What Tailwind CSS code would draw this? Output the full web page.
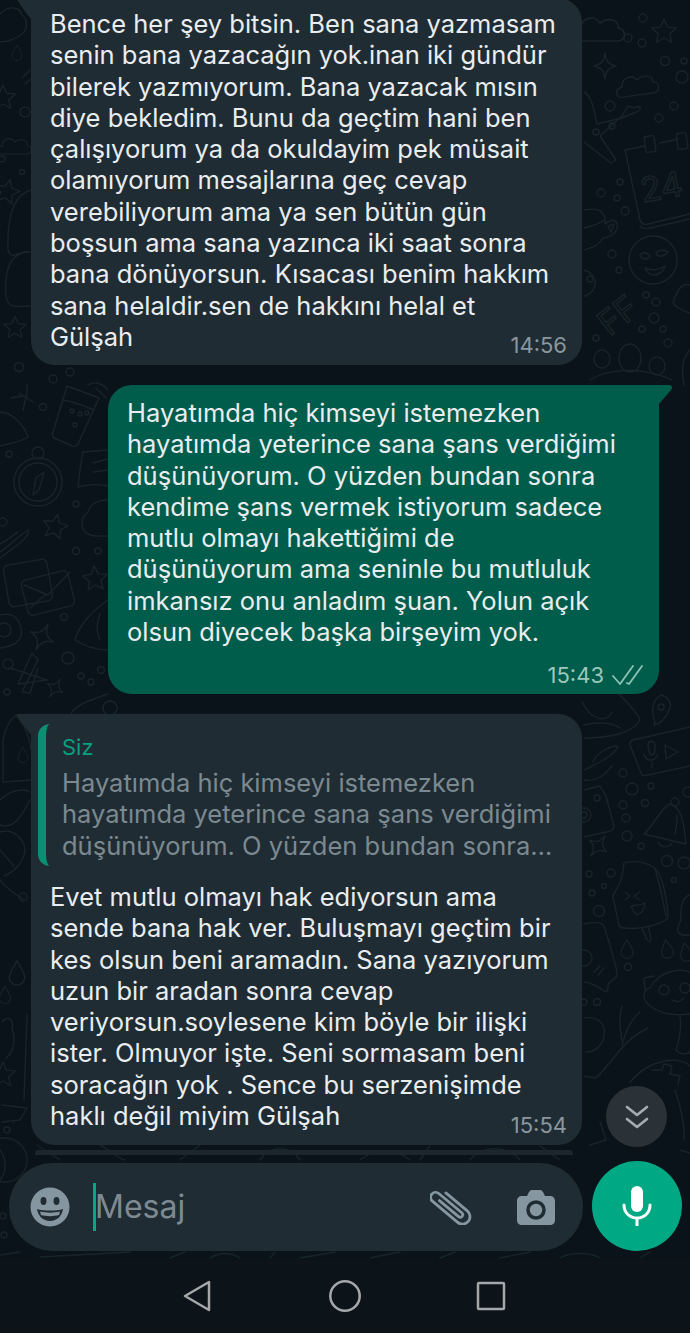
<!DOCTYPE html>
<html><head><meta charset="utf-8"><script src="https://cdn.jsdelivr.net/npm/@tailwindcss/browser@4"></script></head>
<body class="m-0 bg-[#0a1319]">
<div class="relative w-[690px] h-[1333px] overflow-hidden bg-[#0a1319] flex flex-col font-['Inter',sans-serif] text-[25.5px] leading-[31.3px] text-[#e9edef]">
<svg class="absolute inset-0" width="690" height="1333" viewBox="0 0 690 1333" fill="none" stroke="#18242a" stroke-width="1.4" stroke-linejoin="round" stroke-linecap="round">
<defs>
<path id="st" d="M0-13 3.5-4.9 12.4-4 5.7 1.9 7.6 10.5 0 6-7.6 10.5-5.7 1.9-12.4-4-3.5-4.9Z"/>
<path id="s4" d="M0-13C1-5 3-2 11 0 3 2 1 5 0 13-1 5-3 2-11 0-3-2-1-5 0-13Z"/>
<path id="dr" d="M0-11C4-4 7 0 7 4A7 7 0 0 1-7 4C-7 0-4-4 0-11Z"/>
<path id="cl" d="M-18 10C-24 10-24 0-16 0-16-10-4-12 0-5 6-10 16-8 15-1 22 0 22 9 15 10Z"/>
</defs>
<!-- right column, top -->
<use href="#cl" transform="translate(600 29) scale(1.2)"/><use href="#st" transform="translate(664 32)"/><use href="#s4" transform="translate(605 66)"/><use href="#cl" transform="translate(638 85) rotate(-8)"/>
<circle cx="643" cy="18" r="4"/><circle cx="628" cy="38" r="4"/><circle cx="642" cy="43" r="4"/><circle cx="665" cy="61" r="4.5"/><circle cx="684" cy="61" r="3"/><circle cx="682" cy="77" r="6"/><circle cx="610" cy="106" r="5"/><circle cx="674" cy="106" r="4"/><circle cx="659" cy="118" r="4"/><circle cx="612" cy="126" r="3"/><circle cx="596" cy="132" r="3"/><circle cx="620" cy="182" r="3"/><circle cx="601" cy="193" r="4"/><circle cx="617" cy="198" r="3"/><circle cx="625" cy="211" r="4"/><circle cx="612" cy="254" r="4"/><circle cx="619" cy="270" r="3"/><circle cx="646" cy="295" r="3"/><circle cx="656" cy="302" r="4"/><circle cx="654" cy="318" r="5"/><circle cx="642" cy="329" r="3"/><circle cx="663" cy="329" r="3"/><circle cx="668" cy="343" r="4"/><circle cx="596" cy="338" r="3"/>
<path d="M584 92C592 96 594 110 597 124L622 118 636 112C642 110 642 104 634 108L628 106 622 116 600 136 616 160 611 163 584 142"/>
<path d="M625 150 640 220C641 224 644 225 648 224L690 214M640 226C642 229 646 229 650 228L690 219M625 150 645 146M660 143 678 139"/>
<rect x="645" y="136" width="10" height="16" rx="2" transform="rotate(-8 650 144)"/><rect x="677" y="133" width="10" height="16" rx="2" transform="rotate(-8 682 141)"/>
<text x="640" y="199" font-family="Inter" font-size="34" transform="rotate(-10 662 185)">24</text>
<path d="M584 210C600 207 606 212 605 224 612 218 619 220 617 228 615 235 608 238 603 238 600 244 592 248 584 250M584 228C592 226 600 224 604 220M608 226 614 224 611 232Z"/>
<circle cx="653" cy="260" r="24"/><path d="M640 255C642 251 650 253 650 257 646 260 642 260 640 255ZM656 253C659 249 666 250 668 252 664 257 658 258 656 253ZM645 268C652 271 660 270 665 266 664 274 650 280 645 268Z"/>
<text x="594" y="328" font-family="Inter" font-size="34" transform="rotate(-38 615 310)">FF</text>
<path d="M584 270C592 272 598 280 594 288 590 296 584 296 584 296"/><circle cx="590" cy="279" r="3"/>
<path d="M690 285C680 282 675 296 673 303 678 310 690 313 690 313"/>
<ellipse cx="602" cy="359" rx="8" ry="9"/><ellipse cx="630" cy="358" rx="11" ry="14"/><ellipse cx="657" cy="366" rx="8" ry="9"/><path d="M590 380C605 370 640 365 672 380"/><path d="M690 350C680 360 682 375 684 385"/>
<!-- left top -->
<path d="M0 14C10 4 20 8 21 14 28 18 28 30 22 34 14 40 6 42 0 42"/><use href="#dr" transform="translate(17 53) scale(.7)"/><path d="M22 78 30 70M25 84 32 78"/><use href="#st" transform="translate(3 98)"/><circle cx="25" cy="112" r="5"/><use href="#cl" transform="translate(15 146) scale(.8)"/><circle cx="22" cy="172" r="2.5"/><circle cx="2" cy="159" r="3"/><use href="#st" transform="translate(7 192) rotate(15)"/>
<path d="M31 190C12 195 7 220 8 250 12 262 18 250 30 252"/><path d="M30 252C10 252 4 270 6 296 8 310 18 306 30 306"/><use href="#st" transform="translate(15 328) scale(.9)"/>
<!-- left middle -->
<circle cx="19" cy="367" r="4.5"/><circle cx="53" cy="379" r="4"/><circle cx="70" cy="372" r="4"/><circle cx="43" cy="407" r="3.5"/><circle cx="9" cy="454" r="3"/><circle cx="76" cy="504" r="3"/><circle cx="3" cy="522" r="4"/><circle cx="76" cy="551" r="3.5"/><circle cx="98" cy="551" r="3"/><circle cx="64" cy="617" r="3.5"/><circle cx="68" cy="658" r="6"/><circle cx="101" cy="670" r="3.5"/><circle cx="81" cy="676" r="3"/><circle cx="91" cy="682" r="3"/><circle cx="8" cy="664" r="5"/><circle cx="7" cy="692" r="3"/>
<path d="M19 393 33 402M27 385C28 392 26 397 23 410M11 398C18 396 22 396 27 396"/>
<path d="M0 412C12 412 24 425 28 437 20 442 8 444 0 446"/>
<path d="M67 386 99 398 78 444C76 447 73 447 70 445L54 438C52 436 52 434 53 432Z"/><path d="M62 400C72 401 82 405 94 410"/><circle cx="72" cy="411" r="2"/><circle cx="80" cy="414" r="2"/><circle cx="75" cy="425" r="2"/><circle cx="87" cy="413" r="2"/>
<path d="M88 385C96 380 104 385 108 390M96 388 106 398"/>
<circle cx="38" cy="482" r="24"/><circle cx="38" cy="482" r="19"/><circle cx="38" cy="453" r="6"/><path d="M44 472 39 490 33 495 36 478Z"/>
<path d="M83 452 108 450M80 470C82 460 82 456 83 452M108 486C96 484 90 484 78 487L80 470M93 463 108 459M93 472 108 470"/>
<use href="#st" transform="translate(55 527) rotate(12)"/><path d="M108 500C94 500 90 506 88 512 80 518 80 530 88 534 94 537 102 536 108 536"/>
<path d="M0 552C10 545 20 535 28 530 30 536 22 542 0 558M0 544C8 540 14 534 18 532"/>
<rect x="6" y="562" width="44" height="42" rx="5" transform="rotate(-10 28 583)"/><rect x="24" y="575" width="48" height="36" rx="5" transform="rotate(-14 48 593)"/><path d="M24 585 48 595 70 572M30 608 46 594"/>
<use href="#st" transform="translate(95 579) rotate(-4)"/>
<path d="M0 615C12 612 18 618 20 625 24 634 20 642 12 645 8 647 4 647 0 648"/><circle cx="4" cy="630" r="7"/><use href="#s4" transform="translate(42 637) rotate(25) scale(1.1)"/>
<path d="M108 600C90 612 78 628 75 640 82 645 95 650 108 650M100 614C96 624 96 632 100 640"/>
<path d="M10 668 47 680 18 684 32 653 38 660 22 692 30 693 38 668"/><use href="#s4" transform="translate(55 688) rotate(30) scale(.8)"/>
<path d="M70 715C75 705 90 700 108 694"/><circle cx="110" cy="708" r="7"/>
<!-- left lower -->
<path d="M3 740C6 725 12 718 16 715L24 726C28 735 31 744 31 750M3 740 3 782 31 780"/><use href="#dr" transform="translate(23 755) scale(.7)"/>
<path d="M0 800C10 790 24 788 30 792M0 825C14 830 22 815 30 800"/><path d="M0 832C12 828 24 838 25 850 24 862 14 872 4 876M0 850 14 866"/><path d="M0 880C4 886 12 892 24 900"/><circle cx="23" cy="897" r="4"/>
<use href="#dr" transform="translate(17 973) scale(1.1)"/><use href="#dr" transform="translate(5 995) scale(.8)"/><path d="M2 1022C8 1015 14 1020 12 1028 16 1040 14 1052 6 1058M27 1015 24 1100M2 1105 27 1108 20 1120 2 1122"/><use href="#st" transform="translate(3 1075)"/><circle cx="7" cy="1130" r="3"/>
<circle cx="5" cy="1160" r="22"/><path d="M0 1150C6 1158 8 1170 0 1180"/><circle cx="3" cy="1216" r="3"/><circle cx="4" cy="1235" r="3"/><path d="M0 1255 20 1252"/>
<!-- gap lower + right lower -->
<path d="M582 702C590 718 605 725 612 712M615 690C625 700 636 710 640 720 634 732 612 738 584 738M584 725C596 722 612 722 620 728"/>
<path d="M661 695C654 699 652 706 653 714 654 720 656 722 654 725 660 724 666 718 670 708 672 702 667 696 661 695Z"/><circle cx="661" cy="707" r="3"/>
<path d="M633 740 690 727M630 745 641 773C642 776 644 776 648 775L690 766M630 745C629 742 631 741 633 740"/><path d="M648 745C648 750 650 755 652 755 655 755 655 750 655 745 654 740 648 740 648 745ZM644 754C646 762 654 762 658 755M652 762V768"/><path d="M665 745 678 752 666 759Z"/>
<path d="M618 746C616 752 606 760 592 766 588 768 586 770 584 770M618 746C608 746 596 754 593 762M584 780C596 782 604 776 612 766"/>
<circle cx="623" cy="773" r="4"/><circle cx="632" cy="789" r="6"/><circle cx="651" cy="786" r="3"/><circle cx="623" cy="805" r="4"/><circle cx="645" cy="803" r="3.5"/><circle cx="626" cy="818" r="4"/><circle cx="627" cy="836" r="5"/><circle cx="641" cy="846" r="3"/><circle cx="667" cy="861" r="5.5"/><circle cx="684" cy="863" r="6"/><circle cx="674" cy="880" r="2.5"/><circle cx="611" cy="873" r="4"/><circle cx="589" cy="874" r="3"/><circle cx="604" cy="886" r="2.5"/><circle cx="592" cy="893" r="3"/><circle cx="599" cy="911" r="5.5"/><circle cx="628" cy="967" r="3.5"/><circle cx="597" cy="1002" r="3.5"/><circle cx="584" cy="1002" r="3"/><circle cx="688" cy="792" r="5"/>
<path d="M584 790 600 786 606 796 614 826C614 830 610 832 606 832L584 837"/><circle cx="597" cy="798" r="3"/><circle cx="584" cy="815" r="7"/><circle cx="584" cy="815" r="3"/>
<path d="M644 834C654 826 660 808 670 804 680 806 684 820 686 844Z"/><circle cx="675" cy="802" r="4"/><path d="M677 815C678 822 676 828 675 834"/><path d="M658 842C660 848 670 848 672 843"/>
<use href="#s4" transform="translate(598 846) rotate(35) scale(.95)"/>
<path d="M613 897C612 892 622 890 624 863 634 860 652 862 658 872 664 882 668 906 668 918 660 925 640 930 624 928 620 928 618 925 618 920ZM642 928 646 938C650 944 652 942 650 934L648 926M655 868C660 886 664 905 666 916"/>
<path d="M625 892 630 896 625 900M640 892 634 896 640 900M631 906C636 905 642 905 645 903 644 910 640 916 636 914 634 912 632 909 631 906Z"/>
<use href="#dr" transform="translate(627 949) scale(.85)"/><use href="#dr" transform="translate(667 949) rotate(-10) scale(.85)"/><use href="#dr" transform="translate(686 952) rotate(-10) scale(.85)"/>
<path d="M690 895C682 896 680 910 681 920 678 925 676 932 680 934 684 936 688 935 690 935"/>
<path d="M584 924C594 922 602 922 604 926 610 945 614 958 617 972 618 976 616 978 610 982 606 984 610 990 606 992 600 988 590 982 584 982"/><circle cx="584" cy="958" r="8"/><path d="M594 972 600 966M598 975 604 968"/>
<path d="M650 1006C642 1000 642 990 650 988 660 970 680 968 690 972M650 1006C660 1014 676 1016 690 1014M645 990 644 978 654 976"/><circle cx="664" cy="990" r="5"/><circle cx="685" cy="988" r="5"/><path d="M672 1000 678 1002 684 998"/><path d="M680 1016C682 1030 678 1044 676 1050 682 1056 690 1054 690 1050"/>
<path d="M584 1018C596 1016 606 1022 604 1035 603 1046 594 1052 586 1052M622 1006C618 1018 620 1030 622 1040M640 1012C632 1018 626 1030 622 1045M648 1028C636 1034 628 1040 620 1050 612 1060 604 1070 596 1078L584 1076"/>
<path d="M630 1082C650 1058 680 1056 690 1066M652 1070 662 1070 664 1064 672 1066 670 1074 680 1076 678 1084"/>
<!-- gap under bubbles -->
<path d="M37 1145 60 1160M100 1145C110 1150 120 1160 125 1160M200 1145 180 1160M260 1160C270 1145 290 1145 300 1160M360 1160C375 1148 395 1148 410 1160M430 1146 420 1160M470 1160C480 1145 510 1145 520 1160M540 1146 560 1160"/>
<path d="M600 1122 606 1140 590 1145M675 1090C680 1105 685 1125 684 1140M680 1150 690 1153"/>
<path d="M40 1257 130 1252M170 1258 185 1252M210 1258C220 1252 230 1252 240 1258M270 1258 275 1252M300 1258 335 1252M370 1258 400 1252M440 1258 455 1252M500 1258 530 1252M560 1258C570 1252 590 1252 600 1258M640 1258 650 1252"/>
</svg>
<main class="relative flex-1 flex flex-col items-start">
<div class="relative w-[551px] h-[367px] ml-[31px] -mt-[2px] rounded-[24px] rounded-tl-none bg-[#202c33] pl-[19px] pt-[10px]">
<svg class="absolute -left-[14px] top-0" width="15" height="22" viewBox="0 0 15 22"><path d="M0 0H15V22C11 18 5 9 1 3 0 2 0 1 0 0Z" fill="#202c33"/></svg>
<div>Bence her şey bitsin. Ben sana yazmasam</div><div>senin bana yazacağın yok.inan iki gündür</div><div>bilerek yazmıyorum. Bana yazacak mısın</div><div>diye bekledim. Bunu da geçtim hani ben</div><div>çalışıyorum ya da okuldayim pek müsait</div><div>olamıyorum mesajlarına geç cevap</div><div>verebiliyorum ama ya sen bütün gün</div><div>boşsun ama sana yazınca iki saat sonra</div><div>bana dönüyorsun. Kısacası benim hakkım</div><div>sana helaldir.sen de hakkını helal et</div><div>Gülşah</div>
<span class="absolute right-[15px] bottom-[4px] text-[22px] text-[#8a979e]">14:56</span>
</div>
<div class="relative mt-5 ml-[108px] w-[551px] h-[309px] rounded-[24px] rounded-tr-none bg-[#005c4b] pl-[19px] pt-[12px]">
<svg class="absolute -right-[14px] top-0" width="15" height="22" viewBox="0 0 15 22"><path d="M0 0H11C14 0 15 3 13 5L0 20Z" fill="#005c4b"/></svg>
<div>Hayatımda hiç kimseyi istemezken</div><div>hayatımda yeterince sana şans verdiğimi</div><div>düşünüyorum. O yüzden bundan sonra</div><div>kendime şans vermek istiyorum sadece</div><div>mutlu olmayı hakettiğimi de</div><div>düşünüyorum ama seninle bu mutluluk</div><div>imkansız onu anladım şuan. Yolun açık</div><div>olsun diyecek başka birşeyim yok.</div>
<div class="absolute right-[16px] bottom-[3px] flex items-center gap-[8px] text-[22px] text-[#9cc8bc]"><span>15:43</span>
<svg width="31" height="21" viewBox="0 0 31 21" fill="none" stroke="#8fc3b4" stroke-width="1.8" stroke-linecap="round" stroke-linejoin="round"><path d="M1 11 8 19 21 1M15 18 17 19 30 1"/></svg></div>
</div>
<div class="relative mt-5 ml-[31px] w-[551px] h-[431px] rounded-[24px] rounded-tl-none bg-[#202c33] px-[7px] pt-[10px]">
<svg class="absolute -left-[14px] top-0" width="15" height="22" viewBox="0 0 15 22"><path d="M0 0H15V22C11 18 5 9 1 3 0 2 0 1 0 0Z" fill="#202c33"/></svg>
<div class="h-[142px] rounded-l-[12px] border-l-[8px] border-[#0b8f74] pl-[16px] pt-[9px] text-[#7b8991]">
<div class="text-[#06a07f] text-[22px] leading-[28px] mb-[6px]">Siz</div>
<div>Hayatımda hiç kimseyi istemezken</div><div>hayatımda yeterince sana şans verdiğimi</div><div>düşünüyorum. O yüzden bundan sonra…</div>
</div>
<div class="pl-[12px] pt-[15px]"><div>Evet mutlu olmayı hak ediyorsun ama</div><div>sende bana hak ver. Buluşmayı geçtim bir</div><div>kes olsun beni aramadın. Sana yazıyorum</div><div>uzun bir aradan sonra cevap</div><div>veriyorsun.soylesene kim böyle bir ilişki</div><div>ister. Olmuyor işte. Seni sormasam beni</div><div>soracağın yok . Sence bu serzenişimde</div><div>haklı değil miyim Gülşah</div></div>
<span class="absolute right-[15px] bottom-[4px] text-[22px] text-[#8a979e]">15:54</span>
</div>
<div class="mt-[5px] ml-[35px] w-[538px] h-[5px] rounded-t-[4px] bg-[#1c272d]"></div>
<div class="mt-[6px] ml-[9px] flex items-start gap-[9px]">
<div class="mt-[2px] w-[574px] h-[88px] rounded-[44px] bg-[#202c33] flex items-center pl-[21px] pr-[28px]">
<svg width="40" height="40" viewBox="0 0 40 40"><circle cx="20" cy="20" r="19.5" fill="#8696a0"/><ellipse cx="13.5" cy="14" rx="3" ry="4" fill="#202c33"/><ellipse cx="26.5" cy="14" rx="3" ry="4" fill="#202c33"/><path d="M7 22C13 24 27 24 33 22 32 29 27 34 20 34 13 34 8 29 7 22Z" fill="#202c33"/><path d="M10 24.500C16 26 24 26 30 24.500L29 28C24 29.500 16 29.500 11 28Z" fill="#8696a0"/></svg>
<div class="ml-[23px] w-[3px] h-[48px] bg-[#00a884]"></div>
<span class="-ml-[1px] text-[32px] text-[#7d8a91]">Mesaj</span>
<svg class="ml-auto" width="42" height="36" viewBox="-21 -18 42 36" fill="none" stroke="#8696a0" stroke-width="2.800" stroke-linecap="round"><path transform="rotate(-50)" d="M-2.500-13V12A2.500 2.500 0 0 0 2.500 12V-18A5 5 0 0 0-7.500-18V15A7.500 7.500 0 0 0 7.500 15V-13"/></svg>
<svg class="ml-[45px]" width="38" height="35" viewBox="0 0 38 35"><path d="M5 6H10L12 2C13 .6 14 0 15 0H23C24 0 25 .6 26 2L28 6H33C36 6 38 8 38 11V30C38 33 36 35 33 35H5C2 35 0 33 0 30V11C0 8 2 6 5 6Z" fill="#8696a0"/><circle cx="19" cy="20" r="8" fill="#8696a0" stroke="#202c33" stroke-width="3.500"/></svg>
</div>
<div class="w-[90px] h-[90px] rounded-full bg-[#00a884] flex items-center justify-center">
<svg width="30" height="40" viewBox="0 0 30 40" fill="none" stroke="#fff"><rect x="9" y="0" width="12" height="26" rx="6" fill="#fff" stroke="none"/><path d="M2 19C2 27 8 32 15 32 22 32 28 27 28 19" stroke-width="3" stroke-linecap="round"/><path d="M15 31V40" stroke-width="3"/></svg>
</div>
</div>
<div class="absolute left-[606px] top-[1086px] w-[61px] h-[61px] rounded-full bg-[#2a3238] flex items-center justify-center">
<svg width="24" height="24" viewBox="0 0 24 24" fill="none" stroke="#a6aeb3" stroke-width="2.600" stroke-linecap="round" stroke-linejoin="round"><path d="M2 2 12 10 22 2M2 14 12 22 22 14"/></svg>
</div>
</main>
<nav class="relative h-[73px] bg-[#0c1419] flex items-center pl-[183px] pb-[1px]">
<svg width="28" height="32" viewBox="0 0 28 32" fill="none" stroke="#a4a8aa" stroke-width="2.500" stroke-linejoin="round"><path d="M26 2V30L2 16Z"/></svg>
<svg class="ml-[118px]" width="32" height="32" viewBox="0 0 32 32" fill="none" stroke="#a4a8aa" stroke-width="2.500"><circle cx="16" cy="16" r="14.700"/></svg>
<svg class="ml-[115px]" width="30" height="30" viewBox="0 0 30 30" fill="none" stroke="#a4a8aa" stroke-width="2.500"><rect x="2" y="2" width="26" height="26" rx="1"/></svg>
</nav>
</div>
</body></html>
